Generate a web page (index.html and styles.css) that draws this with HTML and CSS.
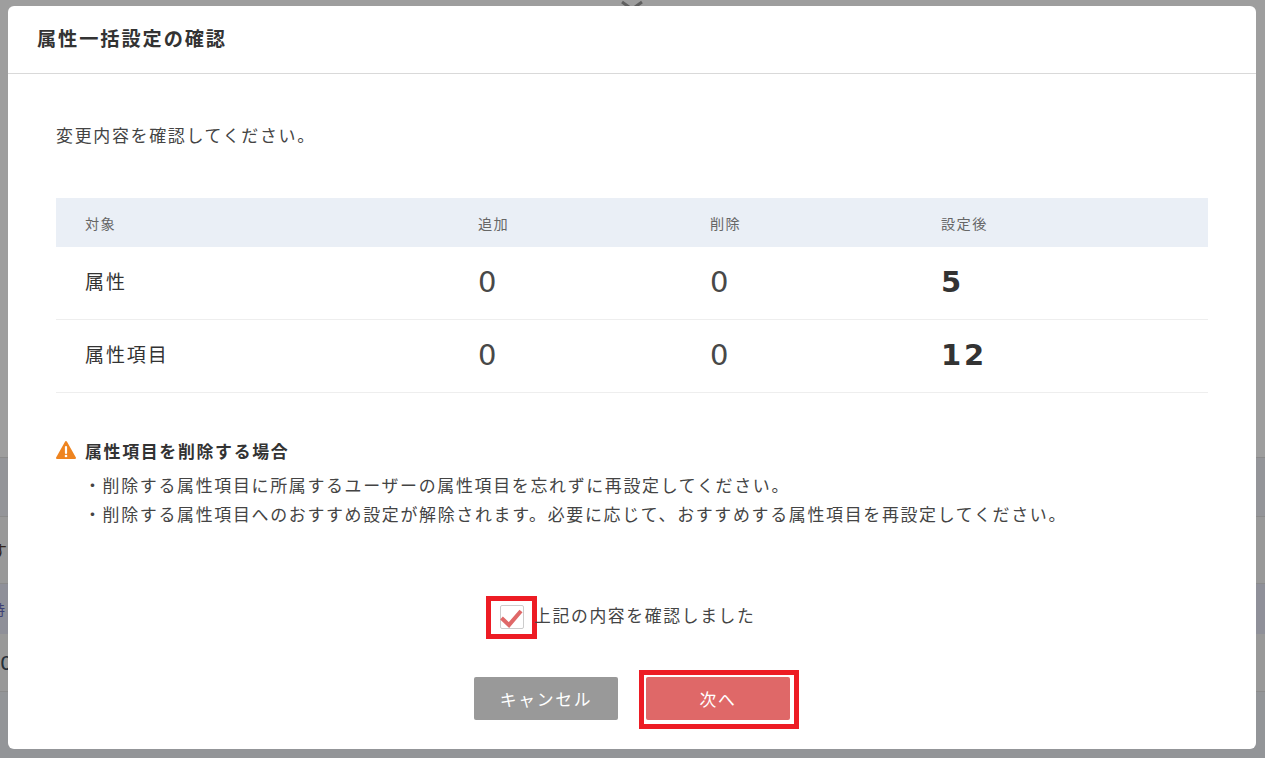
FILE: index.html
```html
<!DOCTYPE html>
<html lang="ja">
<head>
    <meta charset="UTF-8">
    <meta name="viewport" content="width=device-width, initial-scale=1.0">
    <title>属性一括設定の確認</title>
    <link rel="stylesheet" href="styles.css">
</head>
<body>
    <!-- Page behind the modal -->
    <div class="backdrop">
        <div class="bg-row bg-top">
            <svg class="bg-chevron" width="24" height="8" viewBox="0 0 24 8"><path d="M2 2 L9 7 M22 2 L15 7" fill="none" stroke="#606060" stroke-width="3"/></svg>
        </div>
        <div class="bg-row bg-a"></div>
        <div class="bg-row bg-b"><span class="bg-text bg-text-dark">す</span></div>
        <div class="bg-row bg-c"><span class="bg-text bg-text-blue">特</span></div>
        <div class="bg-row bg-d"><span class="bg-text bg-text-num">0</span></div>
        <div class="bg-row bg-e"></div>
    </div>

    <!-- Modal -->
    <div class="modal">
        <div class="modal-header">
            <h2 class="modal-title">属性一括設定の確認</h2>
        </div>
        <div class="modal-body">
            <p class="intro">変更内容を確認してください。</p>

            <div class="summary">
                <div class="summary-row summary-head">
                    <div>対象</div>
                    <div>追加</div>
                    <div>削除</div>
                    <div>設定後</div>
                </div>
                <div class="summary-row">
                    <div class="row-name">属性</div>
                    <div class="num">0</div>
                    <div class="num">0</div>
                    <div class="num num-total">5</div>
                </div>
                <div class="summary-row">
                    <div class="row-name">属性項目</div>
                    <div class="num">0</div>
                    <div class="num">0</div>
                    <div class="num num-total">12</div>
                </div>
            </div>

            <div class="notice">
                <div class="notice-title">
                    <svg class="notice-icon" width="20" height="20" viewBox="0 0 20 20">
                        <path d="M10 2 L19 18 H1 Z" fill="#ee8420" stroke="#ee8420" stroke-width="2" stroke-linejoin="round"/>
                        <path d="M10 7 V13" stroke="#fff" stroke-width="2.2" stroke-linecap="round"/>
                        <circle cx="10" cy="16" r="1.3" fill="#fff"/>
                    </svg>
                    <strong>属性項目を削除する場合</strong>
                </div>
                <ul class="notice-list">
                    <li>・削除する属性項目に所属するユーザーの属性項目を忘れずに再設定してください。</li>
                    <li>・削除する属性項目へのおすすめ設定が解除されます。必要に応じて、おすすめする属性項目を再設定してください。</li>
                </ul>
            </div>

            <label class="confirm">
                <span class="mark-box">
                    <span class="checkbox">
                        <svg width="24" height="24" viewBox="0 0 24 24"><path d="M1.5 13 L9 20 L21 6" fill="none" stroke="#df6868" stroke-width="4"/></svg>
                    </span>
                </span>
                <span class="confirm-text">上記の内容を確認しました</span>
            </label>

            <div class="modal-buttons">
                <button class="btn btn-cancel">キャンセル</button>
                <span class="mark-btn"><button class="btn btn-next">次へ</button></span>
            </div>
        </div>
    </div>
</body>
</html>
```

FILE: styles.css
```css
* {
    box-sizing: border-box;
}

html, body {
    margin: 0;
    height: 758px;
    overflow: hidden;
}

body {
    font-family: "Noto Sans CJK JP", "Noto Sans", sans-serif;
    color: #333;
    background: #939598;
}

/* Page behind the modal */
.backdrop {
    display: flex;
    flex-direction: column;
}

.bg-row {
    display: flex;
    align-items: center;
    overflow: hidden;
    border-bottom: 1px solid #8b8b8b;
}

.bg-top { height: 458px; background: #9e9e9e; align-items: flex-start; }
.bg-a { height: 59px; background: #949599; }
.bg-b { height: 67px; background: #999; }
.bg-c { height: 50px; background: #8f9099; border-bottom: none; }
.bg-d { height: 58px; background: #999; }
.bg-e { height: 67px; background: #939598; border-bottom: none; }

.bg-chevron {
    margin-left: 620px;
}

.bg-text {
    margin-left: -9px;
    font-size: 16px;
    color: #26303a;
}

.bg-text-dark { color: #33241c; }
.bg-text-blue { color: #3d3f75; font-size: 14px; }
.bg-text-num { margin-left: 0; font-size: 20px; font-family: "DejaVu Sans", sans-serif; }

/* Modal */
.modal {
    position: absolute;
    top: 6px;
    left: 8px;
    width: 1248px;
    height: 743px;
    background: #fff;
    border-radius: 6px;
}

.modal-header {
    display: flex;
    align-items: center;
    height: 68px;
    padding: 0 29px 4px;
    border-bottom: 1px solid #d9d9d9;
}

.modal-title {
    margin: 0;
    font-size: 19.2px;
    font-weight: 700;
    letter-spacing: 0.1em;
}

.modal-body {
    padding: 0 48px;
}

.intro {
    margin: 0;
    padding-top: 47px;
    font-size: 16.95px;
    line-height: 28px;
    letter-spacing: 0.1em;
    color: #444;
}

/* Table */
.summary {
    margin-top: 49px;
}

.summary-row {
    display: grid;
    grid-template-columns: 393px 232px 231px 1fr;
    align-items: center;
    height: 73px;
    padding-left: 29px;
    border-bottom: 1px solid #eee;
}

.summary-row > div + div {
    margin-left: -29px;
    padding-left: 29px;
}

.summary-head {
    height: 49px;
    background: #eaeff6;
    border-bottom: none;
    font-size: 14.2px;
    letter-spacing: 0.1em;
    color: #666;
}

.row-name {
    padding-bottom: 6px;
    font-size: 19px;
    letter-spacing: 0.1em;
}

.num {
    padding-bottom: 2px;
    font-family: "DejaVu Sans", sans-serif;
    font-size: 29px;
    letter-spacing: 0.03em;
    color: #484848;
}

.num-total {
    font-weight: 700;
    letter-spacing: 0.1em;
    color: #333;
}

/* Notice */
.notice {
    margin-top: 43px;
}

.notice-title {
    display: flex;
    align-items: center;
    gap: 9px;
    height: 28px;
    font-size: 16.9px;
    letter-spacing: 0.1em;
}

.notice-title strong {
    font-weight: 700;
}

.notice-list {
    margin: 6px 0 0;
    padding: 0 0 0 28px;
    list-style: none;
    font-size: 16.93px;
    line-height: 29px;
    letter-spacing: 0.1em;
    color: #444;
}

/* Confirm checkbox */
.confirm {
    display: flex;
    align-items: center;
    margin-top: 68px;
    padding-left: 430px;
}

.mark-box {
    display: block;
    width: 51px;
    height: 43px;
    padding: 4px 0 0 9px;
    border: 5px solid #ed1c24;
}

.checkbox {
    display: block;
    width: 24px;
    height: 24px;
    border: 1px solid #ccc;
    border-radius: 2px;
}

.checkbox svg {
    display: block;
    margin: -1px;
}

.confirm-text {
    margin-left: -3px;
    padding-bottom: 5px;
    font-size: 16.8px;
    letter-spacing: 0.1em;
    color: #444;
}

/* Buttons */
.modal-buttons {
    display: flex;
    align-items: center;
    margin-top: 31px;
    padding-left: 418px;
}

.btn {
    width: 144px;
    height: 43px;
    border: none;
    border-radius: 2px;
    color: #fff;
    font-family: inherit;
    font-size: 16.8px;
    letter-spacing: 0.1em;
}

.btn-cancel {
    margin-bottom: 2px;
    background: #999;
}

.btn-next {
    background: #df6868;
}

.mark-btn {
    display: block;
    width: 160px;
    height: 59px;
    margin-left: 21px;
    padding: 2px 0 0 2px;
    border: 5px solid #ed1c24;
}
```
